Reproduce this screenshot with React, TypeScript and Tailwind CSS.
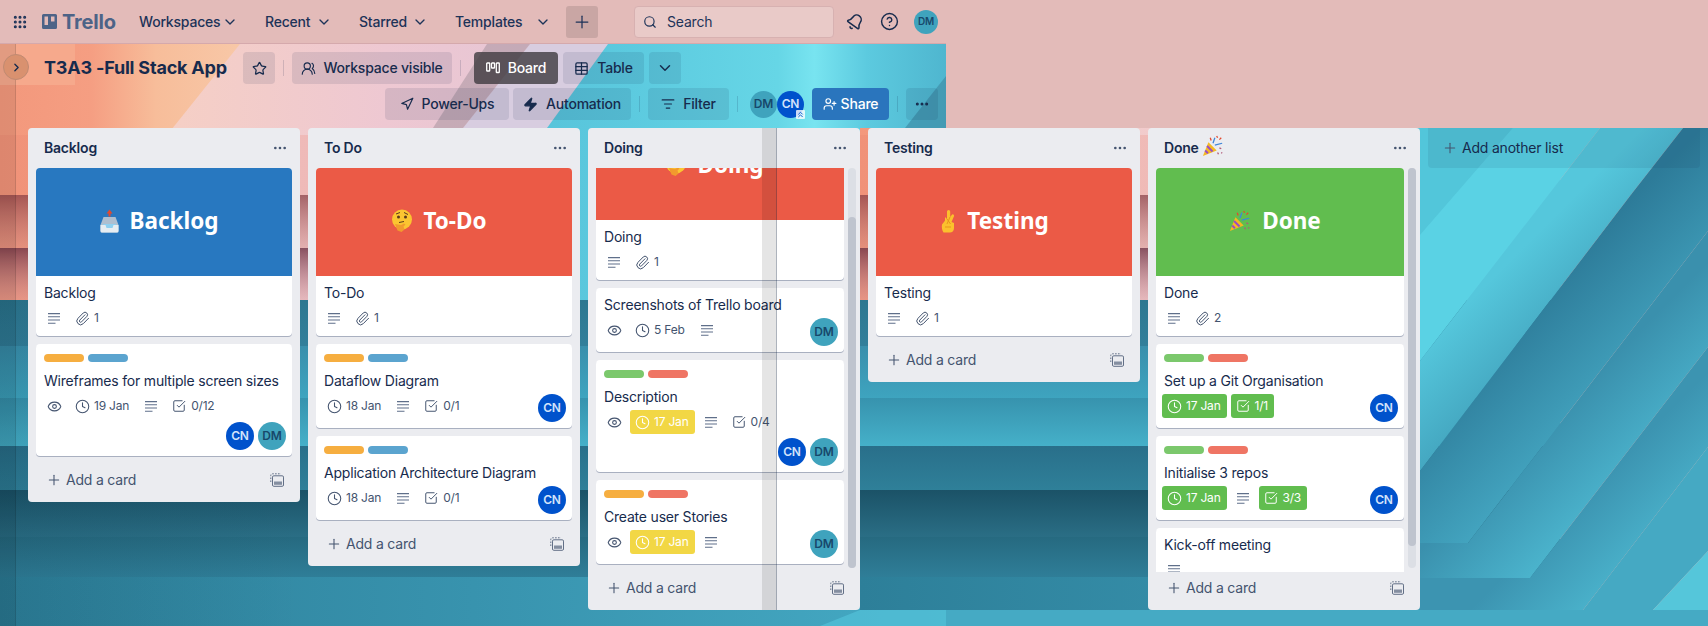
import type { ReactNode } from 'react'
import {
  Bell,
  ChevronDown,
  ChevronRight,
  ChevronsUp,
  CircleHelp,
  Clock,
  Ellipsis,
  Eye,
  Grip,
  ListFilter,
  Navigation,
  Paperclip,
  Plus,
  Search,
  SquareCheckBig,
  Star,
  Table,
  UserPlus,
  UsersRound,
  Zap
} from 'lucide-react'

type Member = 'CN' | 'DM'
type LabelColor = 'orange' | 'blue' | 'green' | 'red'
type Badge =
  | { kind: 'eye' }
  | { kind: 'desc' }
  | { kind: 'attach'; text: string }
  | { kind: 'date'; text: string; tone?: 'yellow' | 'green' }
  | { kind: 'check'; text: string; done?: boolean }

type Card = {
  title: string
  cover?: { color: string; text: string; emoji: ReactNode; offset?: string }
  labels?: LabelColor[]
  badges: Badge[]
  members?: Member[]
  membersBelow?: boolean
}

type List = {
  title: ReactNode
  cards: Card[]
  scroll?: { thumbTop: string; thumbHeight: string; shift?: string }
}

const labelClass: Record<LabelColor, string> = {
  orange: 'bg-[#f6ae40]',
  blue: 'bg-[#5ba4cf]',
  green: 'bg-[#7bc86c]',
  red: 'bg-[#ef7564]'
}

function InboxEmoji() {
  return (
    <svg width="19" height="24" viewBox="0 0 19 24">
      <path d="M9.500 0.500l3 4h-2v3h-2v-3h-2z" fill="#e2492f" />
      <path d="M3.500 8h12l3 8v6a1.500 1.500 0 0 1-1.500 1.500H2a1.500 1.500 0 0 1-1.500-1.500v-6z" fill="#aebfd0" />
      <path d="M3 15h13l-1.500 4h-10z" fill="#8fd0f0" />
      <path d="M0.500 16h5l1 3h6l1-3h5v6a1.500 1.500 0 0 1-1.500 1.500H2a1.500 1.500 0 0 1-1.500-1.500z" fill="#e6edf2" />
    </svg>
  )
}

function ThinkingEmoji() {
  return (
    <svg width="20" height="24" viewBox="0 0 20 24">
      <circle cx="10" cy="10.500" r="10" fill="#fbc531" />
      <circle cx="6.500" cy="8" r="1.500" fill="#5b3a1a" />
      <circle cx="13.500" cy="8" r="1.500" fill="#5b3a1a" />
      <path d="M4 5l4-1.500M12 3.500l4 2M7 13.500l5-1" stroke="#5b3a1a" strokeWidth="1" fill="none" />
      <path d="M3 15l6 1 3-1.500 1.500 1-2 2 1 3-3 2.500-4-1.500z" fill="#f29a2e" />
    </svg>
  )
}

function FingersEmoji() {
  return (
    <svg width="15" height="24" viewBox="0 0 15 24">
      <path d="M2.500 23.500c-1.500-2-2-5.500-1.500-8l2-2.500 1-1.500V8l2 2V2.500a1.600 1.600 0 0 1 3.200 0V8l1.500-2a1.300 1.300 0 0 1 2.300 1.200L10.500 13l2.500 1v5c0 3-2 4.500-4 4.500z" fill="#fbc02d" />
      <path d="M6 10l3.500 5M9 8l-3 7M4 18h6" stroke="#e8951c" strokeWidth="1" fill="none" />
    </svg>
  )
}

function PartyEmoji({ size = 22 }: { size?: number }) {
  return (
    <svg width={size} height={size} viewBox="0 0 24 24">
      <path d="M1 23l6-15 9 9z" fill="#f5b921" />
      <path d="M3.500 17l3 3M5.500 12l6 6" stroke="#9b4fc0" strokeWidth="2.200" fill="none" />
      <path d="M12 9l2-6M14 11l8-2" stroke="#3f86d9" strokeWidth="1.400" fill="none" />
      <path d="M9 3l1 3M16 1l1 2M21 3l-2 2" stroke="#e2492f" strokeWidth="1.400" fill="none" />
      <path d="M19 14l2 1M17 19l1 2M22 19l-1 1" stroke="#b05a78" strokeWidth="1.400" fill="none" />
    </svg>
  )
}

const lists: List[] = [
  {
    title: 'Backlog',
    cards: [
      {
        title: 'Backlog',
        cover: { color: 'bg-[#2878c0]', text: 'Backlog', emoji: <InboxEmoji />, offset: 'pr-[10px]' },
        badges: [{ kind: 'desc' }, { kind: 'attach', text: '1' }]
      },
      {
        title: 'Wireframes for multiple screen sizes',
        labels: ['orange', 'blue'],
        badges: [{ kind: 'eye' }, { kind: 'date', text: '19 Jan' }, { kind: 'desc' }, { kind: 'check', text: '0/12' }],
        members: ['CN', 'DM'],
        membersBelow: true
      }
    ]
  },
  {
    title: 'To Do',
    cards: [
      {
        title: 'To-Do',
        cover: { color: 'bg-[#eb5a46]', text: 'To-Do', emoji: <ThinkingEmoji />, offset: 'pr-[9px]' },
        badges: [{ kind: 'desc' }, { kind: 'attach', text: '1' }]
      },
      {
        title: 'Dataflow Diagram',
        labels: ['orange', 'blue'],
        badges: [{ kind: 'date', text: '18 Jan' }, { kind: 'desc' }, { kind: 'check', text: '0/1' }],
        members: ['CN']
      },
      {
        title: 'Application Architecture Diagram',
        labels: ['orange', 'blue'],
        badges: [{ kind: 'date', text: '18 Jan' }, { kind: 'desc' }, { kind: 'check', text: '0/1' }],
        members: ['CN']
      }
    ]
  },
  {
    title: 'Doing',
    scroll: { thumbTop: 'mt-[49px]', thumbHeight: 'h-[351px]', shift: '-mt-[56px]' },
    cards: [
      {
        title: 'Doing',
        cover: { color: 'bg-[#eb5a46]', text: 'Doing', emoji: <ThinkingEmoji />, offset: 'pr-[10px]' },
        badges: [{ kind: 'desc' }, { kind: 'attach', text: '1' }]
      },
      {
        title: 'Screenshots of Trello board',
        badges: [{ kind: 'eye' }, { kind: 'date', text: '5 Feb' }, { kind: 'desc' }],
        members: ['DM']
      },
      {
        title: 'Description',
        labels: ['green', 'red'],
        badges: [{ kind: 'eye' }, { kind: 'date', text: '17 Jan', tone: 'yellow' }, { kind: 'desc' }, { kind: 'check', text: '0/4' }],
        members: ['CN', 'DM'],
        membersBelow: true
      },
      {
        title: 'Create user Stories',
        labels: ['orange', 'red'],
        badges: [{ kind: 'eye' }, { kind: 'date', text: '17 Jan', tone: 'yellow' }, { kind: 'desc' }],
        members: ['DM']
      }
    ]
  },
  {
    title: 'Testing',
    cards: [
      {
        title: 'Testing',
        cover: { color: 'bg-[#eb5a46]', text: 'Testing', emoji: <FingersEmoji />, offset: 'pr-[18px]' },
        badges: [{ kind: 'desc' }, { kind: 'attach', text: '1' }]
      }
    ]
  },
  {
    title: (
      <span className="flex items-center gap-[3px] h-5">
        Done
        <span className="-mt-1"><PartyEmoji size={22} /></span>
      </span>
    ),
    scroll: { thumbTop: 'mt-0', thumbHeight: 'h-[378px]' },
    cards: [
      {
        title: 'Done',
        cover: { color: 'bg-[#61bd4f]', text: 'Done', emoji: <PartyEmoji />, offset: 'pr-[10px]' },
        badges: [{ kind: 'desc' }, { kind: 'attach', text: '2' }]
      },
      {
        title: 'Set up a Git Organisation',
        labels: ['green', 'red'],
        badges: [{ kind: 'date', text: '17 Jan', tone: 'green' }, { kind: 'check', text: '1/1', done: true }],
        members: ['CN']
      },
      {
        title: 'Initialise 3 repos',
        labels: ['green', 'red'],
        badges: [{ kind: 'date', text: '17 Jan', tone: 'green' }, { kind: 'desc' }, { kind: 'check', text: '3/3', done: true }],
        members: ['CN']
      },
      { title: 'Kick-off meeting', badges: [{ kind: 'desc' }] }
    ]
  }
]

function TrelloMark() {
  return (
    <svg width="15" height="15" viewBox="0 0 15 15">
      <path
        fillRule="evenodd"
        d="M1.500 0h12A1.500 1.500 0 0 1 15 1.500v12a1.500 1.500 0 0 1-1.500 1.500h-12A1.500 1.500 0 0 1 0 13.500v-12A1.500 1.500 0 0 1 1.500 0zM2.500 2.500v8.500h3.500V2.500zM9 2.500v5h3.500v-5z"
        fill="currentColor"
      />
    </svg>
  )
}

function BoardIcon() {
  return (
    <svg width="14" height="12" viewBox="0 0 14 12" fill="none" stroke="currentColor" strokeWidth="1.300">
      <rect x="0.700" y="1" width="3" height="8" rx="0.600" />
      <rect x="5.500" y="1" width="3" height="5" rx="0.600" />
      <rect x="10.300" y="1" width="3" height="9.500" rx="0.600" />
    </svg>
  )
}

function DescIcon() {
  return (
    <svg width="12" height="11" viewBox="0 0 12 11" stroke="#5f6f8a" strokeWidth="1.100">
      <path d="M0 0.600h12M0 3.800h12M0 7h12M0 10.200h7.500" />
    </svg>
  )
}

function TemplateIcon() {
  return (
    <svg width="14" height="14" viewBox="0 0 14 14" fill="none" stroke="#626f86" strokeWidth="1">
      <path d="M0.800 9V2.300A1.500 1.500 0 0 1 2.300 0.800H11" strokeDasharray="1.600 1.300" />
      <rect x="2.500" y="2.800" width="11" height="10.500" rx="1.300" />
      <rect x="4" y="8.500" width="8" height="3.300" fill="#626f86" opacity="0.75" stroke="none" />
    </svg>
  )
}

function Avatar({ who, size = 'w-7 h-7 text-xs' }: { who: Member; size?: string }) {
  const tone = who === 'CN' ? 'bg-[#0052cc] text-[#d3e3fb]' : 'bg-[#3fa3bd] text-[#17486b]'
  return (
    <div className={`${size} ${tone} rounded-full flex items-center justify-center font-semibold shrink-0`}>
      {who}
    </div>
  )
}

function CardBadge({ badge }: { badge: Badge }) {
  const plain = 'flex items-center h-6 p-[2px] mr-1 rounded-[3px] text-xs text-[#44546f]'
  const coloured = (tone?: string) =>
    tone === 'yellow' ? 'bg-[#f2d745] text-white' : tone === 'green' ? 'bg-[#61bd4f] text-white' : 'text-[#44546f]'
  const iconBox = 'w-5 h-5 flex items-center justify-center shrink-0'

  if (badge.kind === 'eye') {
    return (
      <div className={plain}>
        <span className={iconBox}><Eye size={15} strokeWidth={1.700} /></span>
      </div>
    )
  }
  if (badge.kind === 'desc') {
    return (
      <div className={plain}>
        <span className={iconBox}><DescIcon /></span>
      </div>
    )
  }
  if (badge.kind === 'attach') {
    return (
      <div className={plain}>
        <span className={iconBox}><Paperclip size={15} strokeWidth={1.600} /></span>
        <span className="pl-0.5 pr-1">{badge.text}</span>
      </div>
    )
  }
  if (badge.kind === 'date') {
    return (
      <div className={`flex items-center h-6 p-[2px] mr-1 rounded-[3px] text-xs ${coloured(badge.tone)}`}>
        <span className={iconBox}><Clock size={15} strokeWidth={1.700} /></span>
        <span className="pl-0.5 pr-1">{badge.text}</span>
      </div>
    )
  }
  return (
    <div className={`flex items-center h-6 p-[2px] mr-1 rounded-[3px] text-xs ${coloured(badge.done ? 'green' : undefined)}`}>
      <span className={iconBox}><SquareCheckBig size={14} strokeWidth={1.700} /></span>
      <span className="pl-0.5 pr-1">{badge.text}</span>
    </div>
  )
}

function BoardCard({ card, first, shift }: { card: Card; first: boolean; shift?: string }) {
  return (
    <div className={`bg-white rounded-[4px] shadow-[0_1px_0_#a9b0c0] mb-2 shrink-0 ${first && shift ? shift : ''}`}>
      {card.cover && (
        <div className={`${card.cover.color} h-[108px] pb-0.5 rounded-t-[4px] flex items-center justify-center gap-[11px] ${card.cover.offset ?? ''}`}>
          {card.cover.emoji}
          <span className="font-['Noto_Sans',sans-serif] font-bold text-white text-[22.500px] tracking-normal leading-none">{card.cover.text}</span>
        </div>
      )}
      {card.labels && (
        <div className="flex gap-1 pl-2 pt-[10px] mb-2">
          {card.labels.map((label, i) => (
            <span key={i} className={`${labelClass[label]} w-10 h-2 rounded-[4px]`} />
          ))}
        </div>
      )}
      <div className={`px-2 text-sm text-[#172b4d] whitespace-nowrap ${card.labels ? 'h-5 leading-[22px]' : 'h-[26px] pt-[6px] leading-[22px]'}`}>{card.title}</div>
      <div className="flex flex-wrap items-start gap-y-1 px-[6px] pt-1 pb-[6px]">
        <div className="flex">
          {card.badges.map((badge, i) => (
            <CardBadge key={i} badge={badge} />
          ))}
        </div>
        {card.members && (
          <div className={`flex gap-1 ml-auto justify-end ${card.membersBelow ? 'w-full' : ''}`}>
            {card.members.map(m => (
              <Avatar key={m} who={m} />
            ))}
          </div>
        )}
      </div>
    </div>
  )
}

function BoardList({ list }: { list: List }) {
  return (
    <div className="w-[272px] shrink-0 bg-[#ebecf0] rounded-[4px] flex flex-col">
      <div className="h-10 flex items-center justify-between pl-4 pr-1">
        <div className="text-sm font-semibold text-[#172b4d]">{list.title}</div>
        <div className="w-8 h-8 flex items-center justify-center text-[#44546f]">
          <Ellipsis size={16} />
        </div>
      </div>

      {list.scroll ? (
        <div className="flex h-[404px] pl-2 pr-1">
          <div className="w-[248px] overflow-hidden flex flex-col">
            {list.cards.map((card, i) => (
              <BoardCard key={i} card={card} first={i === 0} shift={list.scroll?.shift} />
            ))}
          </div>
          <div className="w-2 h-[400px] ml-1 rounded-full bg-[#dcdfe5] flex flex-col">
            <div className={`${list.scroll.thumbTop} ${list.scroll.thumbHeight} rounded-full bg-[#bfc4ce]`} />
          </div>
        </div>
      ) : (
        <div className="px-2">
          {list.cards.map((card, i) => (
            <BoardCard key={i} card={card} first={i === 0} />
          ))}
        </div>
      )}

      <div className="flex items-center justify-between h-8 pl-[18px] pr-4 mb-[6px] text-sm text-[#44546f]">
        <span className="flex items-center gap-1">
          <Plus size={16} strokeWidth={1.600} />
          Add a card
        </span>
        <TemplateIcon />
      </div>
    </div>
  )
}

function NavMenu({ label, width }: { label: string; width: string }) {
  return (
    <div className={`flex items-center justify-between h-8 pl-3 pr-[11px] mr-1 text-sm font-medium text-[#1d3358] ${width}`}>
      {label}
      <ChevronDown size={16} />
    </div>
  )
}

function HeaderButton({ children, className = '' }: { children: ReactNode; className?: string }) {
  return (
    <div className={`h-8 flex items-center justify-center rounded-[4px] bg-[#091e42]/10 text-sm font-medium text-[#172b4d] ${className}`}>
      {children}
    </div>
  )
}

function Divider({ className = '' }: { className?: string }) {
  return <div className={`w-px h-4 bg-[#091e42]/15 ${className}`} />
}

function Backdrop() {
  return (
    <svg className="absolute inset-0" width="1708" height="626" viewBox="0 0 1708 626">
      <defs>
        <linearGradient id="peach" gradientUnits="userSpaceOnUse" x1="0" x2="260" y1="0" y2="0">
          <stop offset="0" stopColor="#f3987c" />
          <stop offset="0.35" stopColor="#f59e82" />
          <stop offset="0.6" stopColor="#f7bd9a" />
          <stop offset="1" stopColor="#f8caaa" />
        </linearGradient>
        <linearGradient id="pink" gradientUnits="userSpaceOnUse" x1="150" x2="620" y1="0" y2="0">
          <stop offset="0" stopColor="#f6d0c4" />
          <stop offset="0.5" stopColor="#eec8d2" />
          <stop offset="1" stopColor="#e2c4d6" />
        </linearGradient>
        <linearGradient id="redA" x1="0" x2="0" y1="0" y2="1">
          <stop offset="0" stopColor="#8a3f45" stopOpacity="0.75" />
          <stop offset="1" stopColor="#c97f7c" stopOpacity="0.35" />
        </linearGradient>
        <linearGradient id="redB" x1="0" x2="0" y1="0" y2="1">
          <stop offset="0" stopColor="#6d3245" stopOpacity="0.8" />
          <stop offset="1" stopColor="#c98b95" stopOpacity="0.3" />
        </linearGradient>
        <linearGradient id="cyanSky" gradientUnits="userSpaceOnUse" x1="420" x2="946" y1="0" y2="0">
          <stop offset="0" stopColor="#52bcd4" />
          <stop offset="0.4" stopColor="#5ccadf" />
          <stop offset="0.68" stopColor="#66d6e6" />
          <stop offset="0.75" stopColor="#78e4f0" />
          <stop offset="0.85" stopColor="#5ccadf" />
          <stop offset="1" stopColor="#4fb6cf" />
        </linearGradient>
        <linearGradient id="band1" x1="0" x2="0" y1="0" y2="1"><stop offset="0" stopColor="#2c7790" /><stop offset="1" stopColor="#327f9b" /></linearGradient>
        <linearGradient id="band2" x1="0" x2="0" y1="0" y2="1"><stop offset="0" stopColor="#398fac" /><stop offset="1" stopColor="#3ea4bf" /></linearGradient>
        <linearGradient id="band3" x1="0" x2="0" y1="0" y2="1"><stop offset="0" stopColor="#3793ae" /><stop offset="1" stopColor="#45b0c9" /></linearGradient>
        <linearGradient id="band4" x1="0" x2="0" y1="0" y2="1"><stop offset="0" stopColor="#296f8a" /><stop offset="1" stopColor="#2f8099" /></linearGradient>
        <linearGradient id="band5" x1="0" x2="0" y1="0" y2="1"><stop offset="0" stopColor="#1b5267" /><stop offset="1" stopColor="#2a6e85" /></linearGradient>
        <linearGradient id="band6" x1="0" x2="0" y1="0" y2="1"><stop offset="0" stopColor="#266a80" /><stop offset="1" stopColor="#2f7e98" /></linearGradient>
        <linearGradient id="band7" x1="0" x2="1" y1="0" y2="0"><stop offset="0" stopColor="#2d7f99" /><stop offset="0.5" stopColor="#3893ae" /><stop offset="1" stopColor="#45aac4" /></linearGradient>
        <linearGradient id="leftShade" x1="0" x2="1" y1="0" y2="0">
          <stop offset="0" stopColor="#0a3040" stopOpacity="0.28" />
          <stop offset="1" stopColor="#0a3040" stopOpacity="0" />
        </linearGradient>
        <linearGradient id="foldC" gradientUnits="userSpaceOnUse" x1="1480" y1="290" x2="1560" y2="370">
          <stop offset="0" stopColor="#55c7dc" />
          <stop offset="1" stopColor="#3f9db8" />
        </linearGradient>
        <linearGradient id="foldD" gradientUnits="userSpaceOnUse" x1="1540" y1="290" x2="1640" y2="390">
          <stop offset="0" stopColor="#2d7b99" />
          <stop offset="1" stopColor="#45a8c3" />
        </linearGradient>
        <linearGradient id="foldE" gradientUnits="userSpaceOnUse" x1="1570" y1="400" x2="1640" y2="470">
          <stop offset="0" stopColor="#3a90ad" />
          <stop offset="1" stopColor="#4bb4cd" />
        </linearGradient>
        <linearGradient id="foldF" gradientUnits="userSpaceOnUse" x1="1610" y1="470" x2="1670" y2="530">
          <stop offset="0" stopColor="#3c94b1" />
          <stop offset="1" stopColor="#4ab2cb" />
        </linearGradient>
        <clipPath id="firstCopy"><rect x="0" y="44" width="946" height="582" /></clipPath>
        <clipPath id="secondCopy"><rect x="0" y="128" width="700" height="482" /></clipPath>
        <g id="photo">
          <rect x="0" y="44" width="946" height="256" fill="url(#peach)" />
          <polygon points="240,44 946,44 946,300 35,300" fill="url(#pink)" />
          <rect x="0" y="44" width="75" height="41" fill="#f6a98c" />
          <rect x="0" y="135" width="946" height="60" fill="#e8806c" opacity="0.22" />
          <rect x="0" y="195" width="620" height="53" fill="url(#redA)" />
          <rect x="0" y="248" width="620" height="52" fill="url(#redB)" />
          <polygon points="530,44 608,44 547,128 463,128" fill="#d8cde0" />
          <polygon points="487,44 530,44 463,128 433,128" fill="#a8949f" opacity="0.55" />
          <polygon points="608,44 946,44 946,300 422,300" fill="url(#cyanSky)" />
          <polygon points="946,76 946,128 905,128" fill="#3f8ea8" opacity="0.7" />
          <rect x="0" y="300" width="946" height="46" fill="url(#band1)" />
          <rect x="0" y="346" width="946" height="52" fill="url(#band2)" />
          <rect x="0" y="398" width="946" height="48" fill="url(#band3)" />
          <rect x="0" y="446" width="946" height="44" fill="url(#band4)" />
          <rect x="0" y="490" width="946" height="47" fill="url(#band5)" />
          <rect x="0" y="537" width="946" height="40" fill="url(#band6)" />
          <rect x="0" y="577" width="946" height="49" fill="url(#band7)" />
          <polygon points="820,626 860,610 946,610 946,626" fill="#52c2d8" opacity="0.7" />
        </g>
      </defs>

      <rect width="1708" height="626" fill="#e3bbb9" />
      <rect x="0" y="43" width="946" height="1" fill="#d5a9ac" />
      <g clipPath="url(#firstCopy)">
        <use href="#photo" />
        <rect x="0" y="300" width="300" height="326" fill="url(#leftShade)" opacity="0.45" />
        <rect x="0" y="44" width="15" height="582" fill="#000" opacity="0.08" />
        <rect x="15" y="44" width="1" height="582" fill="#000" opacity="0.18" />
      </g>
      <g transform="translate(860 0)" clipPath="url(#secondCopy)">
        <use href="#photo" />
      </g>
      <rect x="946" y="610" width="762" height="16" fill="#45aac4" />

      <polygon points="1420,128 1513,128 1420,235" fill="#52c6da" />
      <polygon points="1513,128 1600,128 1420,361 1420,235" fill="#5ad2e4" />
      <polygon points="1600,128 1683,128 1633,192 1420,471 1420,361" fill="url(#foldC)" />
      <polygon points="1683,128 1708,128 1708,231 1468,543 1420,543 1420,471 1633,192" fill="url(#foldD)" />
      <polygon points="1708,231 1708,347 1530,578 1420,578 1420,543 1468,543" fill="url(#foldE)" />
      <polygon points="1708,347 1708,447 1583,610 1420,610 1420,578 1530,578" fill="url(#foldF)" />
      <polygon points="1708,447 1708,551 1653,610 1583,610" fill="#45a9c3" />
      <polygon points="1708,551 1708,610 1653,610" fill="#55c6da" />
    </svg>
  )
}

export default function App() {
  return (
    <div className="relative w-[1708px] h-[626px] overflow-hidden font-['Inter','Liberation_Sans',sans-serif] tracking-[-0.2px] text-[#172b4d]">
      <Backdrop />

      {/* Top bar */}
      <div className="relative h-11 flex items-center pl-[12px] pb-px">
        <Grip size={16} strokeWidth={2.600} className="mr-[14px] text-[#1d3358]" />
        <div className="flex items-center gap-[5px] w-[85px] text-[#4d6387]">
          <TrelloMark />
          <span className="text-xl font-bold leading-none">Trello</span>
        </div>
        <NavMenu label="Workspaces" width="w-[122px]" />
        <NavMenu label="Recent" width="w-[90px]" />
        <NavMenu label="Starred" width="w-[92px]" />
        <NavMenu label="Templates" width="w-[119px]" />
        <div className="w-8 h-8 rounded-[3px] bg-[#c9a6a4] flex items-center justify-center text-[#1d3358]">
          <Plus size={20} strokeWidth={1.500} />
        </div>
        <div className="w-[200px] h-8 ml-[36px] rounded-[4px] border border-[#d7b1b1] bg-[#e9cac8] flex items-center gap-[10px] pl-2 text-sm text-[#1d3358]">
          <Search size={14} strokeWidth={2} />
          Search
        </div>
        <Bell size={18} strokeWidth={2} className="ml-[12px] rotate-[35deg] text-[#172b4d]" />
        <CircleHelp size={19} strokeWidth={1.800} className="ml-[16px] text-[#172b4d]" />
        <div className="ml-[15px]">
          <Avatar who="DM" size="w-6 h-6 text-[10px]" />
        </div>
      </div>

      {/* Board header */}
      <div className="relative w-[946px] h-[84px] pt-2">
        <div className="absolute left-[3px] top-[10px] w-[26px] h-[26px] rounded-full border border-[#c08a72] bg-[#d9916f] flex items-center justify-center">
          <ChevronRight size={13} strokeWidth={2.500} />
        </div>
        <div className="flex items-center h-8 pl-[44px]">
          <h1 className="text-lg font-bold w-[183px] whitespace-nowrap">T3A3 -Full Stack App</h1>
          <HeaderButton className="w-8 ml-4">
            <Star size={15} strokeWidth={2} />
          </HeaderButton>
          <Divider className="ml-2 mr-2" />
          <HeaderButton className="w-[160px] gap-[7px]">
            <UsersRound size={15} strokeWidth={1.800} />
            Workspace visible
          </HeaderButton>
          <Divider className="ml-2 mr-[13px]" />
          <div className="w-[84px] h-8 flex items-center justify-center gap-2 rounded-[4px] bg-[#3e3b40]/80 text-sm font-medium text-white">
            <BoardIcon />
            Board
          </div>
          <HeaderButton className="w-[81px] ml-[5px] gap-2">
            <Table size={15} strokeWidth={2} />
            Table
          </HeaderButton>
          <HeaderButton className="w-8 ml-[5px]">
            <ChevronDown size={18} />
          </HeaderButton>
        </div>
        <div className="flex items-center justify-end h-8 mt-1 pr-2">
          <HeaderButton className="w-[124px] gap-[8px]">
            <Navigation size={14} strokeWidth={2} />
            Power-Ups
          </HeaderButton>
          <HeaderButton className="w-[118px] ml-1 gap-[8px]">
            <Zap size={15} fill="currentColor" />
            Automation
          </HeaderButton>
          <Divider className="ml-2 mr-2" />
          <HeaderButton className="w-[81px] gap-[8px]">
            <ListFilter size={14} strokeWidth={2} />
            Filter
          </HeaderButton>
          <Divider className="ml-2 mr-3" />
          <Avatar who="DM" size="w-[27px] h-[27px] text-xs" />
          <div className="relative">
            <Avatar who="CN" size="w-[27px] h-[27px] text-xs" />
            <span className="absolute -right-[1px] -bottom-[1px] w-[9px] h-[9px] bg-white/80 rounded-[1px] text-[#0052cc] flex items-center justify-center">
              <ChevronsUp size={9} strokeWidth={2.500} />
            </span>
          </div>
          <div className="w-[77px] h-8 ml-2 flex items-center justify-center gap-[4px] rounded-[4px] bg-[#2a75bd] text-sm font-medium text-white">
            <UserPlus size={14} strokeWidth={2} />
            Share
          </div>
          <Divider className="ml-2 mr-2" />
          <HeaderButton className="w-8">
            <Ellipsis size={16} strokeWidth={2.500} />
          </HeaderButton>
        </div>
      </div>

      {/* Lists */}
      <div className="relative flex items-start gap-2 pl-[28px]">
        {lists.map((list, i) => (
          <BoardList key={i} list={list} />
        ))}
        <div className="w-[272px] h-10 shrink-0 flex items-center gap-1 pl-[14px] rounded-b-[4px] bg-[#091e42]/[.08] text-sm">
          <Plus size={16} strokeWidth={1.600} className="text-[#44546f]" />
          Add another list
        </div>
        {/* the faint capture seam over the Doing list */}
        <div className="absolute left-[762px] top-0 w-[15px] h-[482px] bg-black/10 border-r border-[#091e42]/25 pointer-events-none" />
      </div>
    </div>
  )
}
